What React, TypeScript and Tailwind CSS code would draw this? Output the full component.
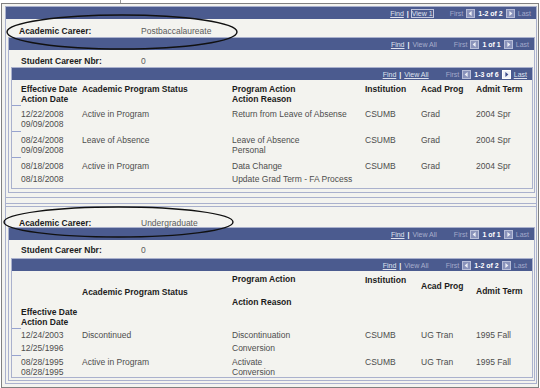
import React from 'react'

type ArrowProps = { dir: 'left' | 'right'; active?: boolean }

function Arrow({ dir, active }: ArrowProps) {
  const tri = dir === 'left' ? 'M5.6 2 L2.6 4.5 L5.6 7 Z' : 'M3.4 2 L6.4 4.5 L3.4 7 Z'
  return (
    <svg width="9" height="9" viewBox="0 0 9 9" className="block">
      <rect x="0.5" y="0.5" width="8" height="8" fill={active ? '#eef0f8' : '#8a93bb'} stroke={active ? '#ffffff' : '#b8bed8'} />
      <path d={tri} fill={active ? '#3e4d8c' : '#eceef5'} />
    </svg>
  )
}

type NavBarProps = {
  view: string
  viewLink?: boolean
  viewBox?: boolean
  count: string
  nextActive?: boolean
  lastLink?: boolean
}

function NavBar({ view, viewLink, viewBox, count, nextActive, lastLink }: NavBarProps) {
  return (
    <div className="flex h-[12px] items-center justify-end bg-[#4b5b8f] pr-[5px] text-[7px] leading-none">
      <span className="text-[#dfe2ee] underline">Find</span>
      <span className="mx-[3px] font-bold text-white">|</span>
      <span
        className={`${viewLink ? 'text-[#dfe2ee] underline' : 'text-[#a9afcc]'} ${viewBox ? 'outline outline-1 outline-[#c3c8de]' : ''}`}
      >
        {view}
      </span>
      <span className="ml-[17px] text-[#a3aacb]">First</span>
      <span className="ml-[3px]">
        <Arrow dir="left" />
      </span>
      <span className="ml-[3px] font-bold text-white">{count}</span>
      <span className="ml-[3px]">
        <Arrow dir="right" active={nextActive} />
      </span>
      <span className={`ml-[3px] ${lastLink ? 'text-[#dfe2ee] underline' : 'text-[#a3aacb]'}`}>Last</span>
    </div>
  )
}

const cols = 'grid grid-cols-[61px_150px_133px_56px_55px_1fr] pl-[9px] whitespace-nowrap'

type RowData = {
  dates: [string, string]
  status: string
  action: [string, string]
  inst: string
  prog: string
  term: string
  gap?: string
  pt?: string
  pb?: string
}

function Tick() {
  return <div className="h-px w-[9px] bg-[#97a3cf]" />
}

function DataRow({ dates, status, action, inst, prog, term, gap = '', pt = 'pt-[3px]', pb = 'pb-[2px]' }: RowData) {
  return (
    <div className={`${cols} ${pt} ${pb} text-[8.5px] leading-[10px] text-[#4d4d4d]`}>
      <div>
        <div>{dates[0]}</div>
        <div className={gap}>{dates[1]}</div>
      </div>
      <div>{status}</div>
      <div>
        <div>{action[0] || '\u00a0'}</div>
        <div className={gap}>{action[1] || '\u00a0'}</div>
      </div>
      <div>{inst}</div>
      <div>{prog}</div>
      <div>{term}</div>
    </div>
  )
}

function FieldRow({ label, value, h, pt, lw = 'w-[120px]' }: { label: string; value: string; h: string; pt: string; lw?: string }) {
  return (
    <div className={`flex ${h} ${pt} text-[8.5px] leading-[10px]`}>
      <span className={`${lw} shrink-0 font-bold text-[#1c1c1c]`}>{label}</span>
      <span className="text-[#5a5a5a]">{value}</span>
    </div>
  )
}

export default function App() {
  return (
    <div className="relative h-[388px] w-[540px] overflow-hidden bg-white font-['Liberation_Sans',Arial,sans-serif]">
      <div className="absolute left-[120px] top-0 h-[3px] w-px bg-[#9a9a9a]" />
      <div className="ml-[1px] mt-[3px] w-[538px] border border-[#808080] bg-[#f3f3ef] pb-[3px] pt-[2px]">
        <div className="ml-[3px] mr-[1px] border border-[#aab1cd] pb-[2px]">
          <NavBar view="View 1" viewLink viewBox count="1-2 of 2" />

          {/* career 1 */}
          <div className="border-b border-[#aab1cd] pb-[4px]">
            <div className="pl-[13px]">
              <FieldRow label="Academic Career:" value="Postbaccalaureate" h="h-[18px]" pt="pt-[7px]" lw="w-[122px]" />
            </div>
            <div className="ml-[2px] mr-[1px] border border-[#aab1cd] pb-[3px]">
              <NavBar view="View All" count="1 of 1" />
              <div className="pl-[12px]">
                <FieldRow label="Student Career Nbr:" value="0" h="h-[17px]" pt="pt-[6px]" />
              </div>
              <div className="ml-[2px] mr-[1px] border border-[#aab1cd]">
                <NavBar view="View All" viewLink count="1-3 of 6" nextActive lastLink />
                <div className={`${cols} pb-[1px] pt-[4px] text-[8.5px] font-bold leading-[10px] text-[#1c1c1c]`}>
                  <div>
                    <div>Effective Date</div>
                    <div>Action Date</div>
                  </div>
                  <div>Academic Program Status</div>
                  <div>
                    <div>Program Action</div>
                    <div>Action Reason</div>
                  </div>
                  <div>Institution</div>
                  <div>Acad Prog</div>
                  <div>Admit Term</div>
                </div>
                <Tick />
                <DataRow
                  dates={['12/22/2008', '09/09/2008']}
                  status="Active in Program"
                  action={['Return from Leave of Absense', '']}
                  inst="CSUMB"
                  prog="Grad"
                  term="2004 Spr"
                />
                <Tick />
                <DataRow
                  dates={['08/24/2008', '09/09/2008']}
                  status="Leave of Absence"
                  action={['Leave of Absence', 'Personal']}
                  inst="CSUMB"
                  prog="Grad"
                  term="2004 Spr"
                />
                <Tick />
                <DataRow
                  dates={['08/18/2008', '08/18/2008']}
                  status="Active in Program"
                  action={['Data Change', 'Update Grad Term - FA Process']}
                  inst="CSUMB"
                  prog="Grad"
                  term="2004 Spr"
                  gap="mt-[3px]"
                  pb="pb-[4px]"
                />
              </div>
            </div>
          </div>

          {/* career 2 */}
          <div className="mt-[5px] border-t border-[#aab1cd]">
            <div className="h-[3px] border-b border-[#aab1cd]" />
            <div className="pl-[13px]">
              <FieldRow label="Academic Career:" value="Undergraduate" h="h-[20px]" pt="pt-[11px]" lw="w-[122px]" />
            </div>
            <div className="ml-[2px] mr-[1px] border border-[#aab1cd] pb-[2px]">
              <NavBar view="View All" count="1 of 1" />
              <div className="pl-[12px]">
                <FieldRow label="Student Career Nbr:" value="0" h="h-[18px]" pt="pt-[5px]" />
              </div>
              <div className="ml-[2px] mr-[1px] border border-[#aab1cd]">
                <NavBar view="View All" count="1-2 of 2" />
                <div className={`${cols} h-[57px] text-[8.5px] font-bold leading-[10px] text-[#1c1c1c]`}>
                  <div className="pt-[36px]">
                    <div>Effective Date</div>
                    <div>Action Date</div>
                  </div>
                  <div className="pt-[16px]">Academic Program Status</div>
                  <div className="pt-[3px]">
                    <div>Program Action</div>
                    <div className="mt-[13px]">Action Reason</div>
                  </div>
                  <div className="pt-[4px]">Institution</div>
                  <div className="pt-[10px]">Acad Prog</div>
                  <div className="pt-[15px]">Admit Term</div>
                </div>
                <Tick />
                <DataRow
                  dates={['12/24/2003', '12/25/1996']}
                  status="Discontinued"
                  action={['Discontinuation', 'Conversion']}
                  inst="CSUMB"
                  prog="UG Tran"
                  term="1995 Fall"
                  gap="mt-[3px]"
                  pt="pt-[1px]"
                />
                <Tick />
                <DataRow
                  dates={['08/28/1995', '08/28/1995']}
                  status="Active in Program"
                  action={['Activate', 'Conversion']}
                  inst="CSUMB"
                  prog="UG Tran"
                  term="1995 Fall"
                  pt="pt-[1px]"
                  pb="pb-0"
                />
              </div>
            </div>
          </div>
        </div>
      </div>

      <svg className="pointer-events-none absolute left-0 top-0" width="540" height="388" viewBox="0 0 540 388">
        <ellipse cx="122" cy="32" rx="115" ry="17" fill="none" stroke="#111" strokeWidth="1.4" />
        <ellipse cx="118.5" cy="222" rx="114.5" ry="15" fill="none" stroke="#111" strokeWidth="1.4" />
      </svg>
    </div>
  )
}
